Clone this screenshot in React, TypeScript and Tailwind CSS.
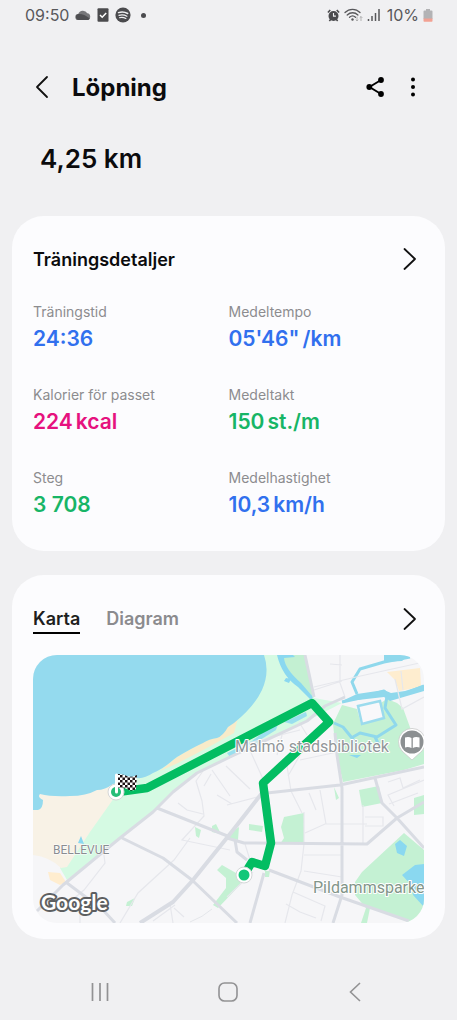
import React from "react";

type Metric = { label: string; value: string; unit?: string; tone: string };

const metrics: Metric[] = [
  { label: "Träningstid", value: "24:36", tone: "text-[#3170ee]" },
  { label: "Medeltempo", value: "05'46\"", unit: "/km", tone: "text-[#3170ee]" },
  { label: "Kalorier för passet", value: "224", unit: "kcal", tone: "text-[#e6127e]" },
  { label: "Medeltakt", value: "150", unit: "st./m", tone: "text-[#17b566]" },
  { label: "Steg", value: "3 708", tone: "text-[#17b566]" },
  { label: "Medelhastighet", value: "10,3", unit: "km/h", tone: "text-[#3170ee]" },
];

function StatusBar() {
  return (
    <div className="flex h-[30px] items-center justify-between pr-6 pl-[25px] text-[#58585b]">
      <div className="flex items-center gap-[6px]">
        <span className="text-base">09:50</span>
        <svg width="16" height="12" viewBox="0 0 16 12" aria-hidden="true">
          <path d="M3.5 11a3 3 0 0 1-.3-6A5 5 0 0 1 12.3 4.300a3.400 3.400 0 0 1 .2 6.700z" fill="#77777a" />
          <path d="M3.500 11a3 3 0 0 1-1-5.700C6 4.500 10 6 14.800 9.500c-.6 1-1.300 1.500-2.300 1.500z" fill="#4f4f52" />
        </svg>
        <svg width="12" height="14" viewBox="0 0 12 14" aria-hidden="true">
          <rect x=".5" y=".3" width="11" height="13.400" rx="1" fill="#4b4b4e" />
          <path d="m3 7 2.200 2.200L9.200 5" fill="none" stroke="#fff" strokeWidth="1.500" />
        </svg>
        <svg width="16" height="16" viewBox="0 0 16 16" aria-hidden="true">
          <circle cx="8" cy="8" r="7.600" fill="#4b4b4e" />
          <g fill="none" stroke="#f0f0f2" strokeLinecap="round">
            <path d="M3.500 5.600c3-.9 6.500-.6 9.200.9" strokeWidth="1.500" />
            <path d="M4 8.300c2.700-.8 5.600-.4 7.900.9" strokeWidth="1.300" />
            <path d="M4.500 10.700c2.200-.6 4.400-.3 6.400.8" strokeWidth="1.100" />
          </g>
        </svg>
        <span className="ml-1 size-[5px] rounded-full bg-[#4b4b4e]" />
      </div>
      <div className="flex items-center gap-1">
        <svg width="13" height="13" viewBox="0 0 14 14" aria-hidden="true">
          <path d="M1 3.700 3.500 1M13 3.700 10.500 1M2.500 13l1.700-2M11.500 13l-1.700-2" stroke="#4b4b4e" strokeWidth="1.700" />
          <circle cx="7" cy="7.500" r="5.400" fill="#4b4b4e" />
          <path d="M7 4.300v3.400h2.600" fill="none" stroke="#f0f0f2" strokeWidth="1.200" />
        </svg>
        <svg width="19" height="14" viewBox="0 0 19 14" aria-hidden="true">
          <g fill="none" stroke="#58585b" strokeWidth="1.300" strokeLinecap="round">
            <path d="M1 4.500c4.300-4.300 10.800-4.300 15 0M3.200 7c3.200-3 7.600-3 10.700 0M5.500 9.300c1.900-1.700 4.300-1.700 6 0" />
          </g>
          <circle cx="8.500" cy="11.500" r="1.200" fill="#58585b" />
          <path d="M13 8.500V13m-1.300-1.300L13 13l1.300-1.300M17 13V8.500m-1.300 1.300L17 8.500l1.300 1.300" fill="none" stroke="#aaa" strokeWidth=".9" />
        </svg>
        <svg width="13" height="14" viewBox="0 0 13 14" aria-hidden="true">
          <path d="M1.500 13v-2M5 13V8M8.500 13V5M12 13V1" stroke="#58585b" strokeWidth="1.500" />
        </svg>
        <span className="ml-[3px] text-base">10%</span>
        <svg width="10" height="14" viewBox="0 0 10 14" aria-hidden="true">
          <path d="M3 1h4v1.500h1.500q1 0 1 1V11h-9V3.500q0-1 1-1H3z" fill="#b3b3b5" />
          <path d="M.5 10.500h9V13q0 .7-.8.7H1.300q-.8 0-.8-.7z" fill="#f2a193" />
        </svg>
      </div>
    </div>
  );
}

function ChevronRight() {
  return (
    <svg width="14" height="24" viewBox="0 0 14 24" fill="none" aria-hidden="true">
      <path d="m1.500 2 10.500 10-10.500 10" stroke="#111" strokeWidth="1.800" strokeLinecap="round" strokeLinejoin="round" />
    </svg>
  );
}

function RouteMap() {
  return (
    <svg viewBox="33 655 391 268" className="block w-full rounded-[24px]" role="img" aria-label="Karta">
      <defs>
        <pattern id="checks" width="5" height="5" patternUnits="userSpaceOnUse">
          <rect width="5" height="5" fill="#fff" />
          <path d="M0 0h2.500v2.500H0zM2.500 2.500H5V5H2.500z" fill="#1c1113" />
        </pattern>
      </defs>
      <rect x="33" y="655" width="391" height="268" fill="#f6f6f8" />

      {/* parks along the shore */}
      <path d="M264 655H305L314 698 342 703 307 721 230 758 197 773 173 792 153 812 120 838 67 880 60 868 100 800 110 784 170 755 230 722Z" fill="#d5fae3" />
      <path d="M279 655H305L313 697Q292 676 279 658Z" fill="#c3f0d2" />
      {/* beach */}
      <path d="M33 792 113 784Q116 791 114 798 107 808 90 832L67 867 61 868Q50 857 33 855Z" fill="#f8f2e6" />
      <path d="M48 872 60 873 66 882 60 885 50 880Z" fill="#ffedcf" />
      <path d="M238 718 230 725 217 737 203 742 177 757 160 771 178 763 205 749 234 733Z" fill="#f8ebc9" />
      {/* sea */}
      <path d="M33 655H264Q270 672 262 690 254 707 234 723L228 727Q223 736 217 738 209 739 203 743 192 748 177 757L173 760Q163 769 153 773 144 779 137 778L113 784Q105 790 97 790 86 796 70 796 52 797 40 794 37 797 43 800 43 809 38 810L33 810Z" fill="#94daee" />

      {/* castle park and Pildammsparken */}
      <path d="M342 705 357 709 361 724 383 718 379 704 387 699 397 703 403 708 411 730 424 742V764L404 770 343 782 336 752 333 724Z" fill="#c4f1d3" />
      <path d="M404 833 424 850V914L410 923 390 914 370 908 367 923H361L366 908 355 895V882L362 872Z" fill="#c4f1d3" />
      <g fill="#c4f1d3">
        <path d="M284 817 304 813V844H280L284 838 281 827Z" />
        <path d="M359 790 379 786 382 803 362 807Z" />
        <path d="M414 798 424 795V814L414 815Z" />
        <path d="M217 870 222 865 243 877 240 885 218 908 213 905 226 888 226 878Z" />
        <path d="M127 902 135 898 132 906 126 906ZM195 827 201 830 199 838 196 836ZM212 826 216 824 221 834 212 832ZM249 824 263 826 262 832 249 830ZM230 833 239 827 238 840 229 838ZM334 787 339 798 336 800ZM265 871H270L269 877H265Z" />
      </g>
      <g fill="#8ad8f0">
        <path d="M395 844 400 840 407 846 404 856 397 853ZM402 875 415 865 424 864V907L413 895 411 885Z" />
        <path d="M78 843 81 836 84 844ZM349 755 361 755 357 758Z" />
        <path d="M277 655H293L295 657 284 658Q285 669 301 683L313 697 311 700 298 687Q282 676 277 655ZM286 678 291 679 289 683 284 681Z" />
        <path d="M227 753 252 741 266 730 278 724 276 730 252 745 230 757ZM284 722 306 712 307 716 292 724Z" opacity=".8" />
      </g>
      <path d="M387 672 420 668 421 687 399 691 395 680Z" fill="#feedcf" />
      <path d="M190 922Q203 917 212 909" fill="none" stroke="#e4e6ea" />

      {/* castle and canals */}
      <path d="M358 706 380 701 384 718 362 724Z" fill="#f8f8fa" stroke="#9bdbed" strokeWidth="2.500" />
      <path d="M357 694 352 682 360 669 384 662 410 657M342 702 360 698 384 691 389 697 404 694 424 686M387 696 385 708 396 725 377 737 360 733 353 737M334 723 343 727 352 738 360 750M375 737 381 749" fill="none" stroke="#8fd8ec" strokeWidth="3" strokeLinejoin="round" />
      <path d="M342 701 357 694 384 690 391 693 405 691 424 685V691L390 701 384 697 358 700ZM384 655H409L402 661 384 662Z" fill="#8fd8ec" />

      {/* minor streets */}
      <path d="M340 655 340 683 345 697M314 687 356 677 424 662M395 679 402 709 424 697M330 664 342 665M401 671 403 690M314 690 342 681M283 731 277 755M299 722 307 735M211 774 204 786M178 803 187 810 203 814M203 771 196 781 202 801 204 816 182 840 230 850M190 838 174 860 138 893 120 923M103 848 105 863 84 890 72 900M153 921 175 905M174 908 184 917M170 904 173 923M80 901V923M212 770 230 796M217 795 232 804M287 766 291 791 302 813M309 793 316 810M320 790 326 824M288 776 300 755M300 760 342 751M227 805 265 795M305 833 325 824 367 824M363 805V844M365 817H383V826H365M304 812V844L301 871 292 895 285 923M304 855H342M304 871 342 877M293 892 325 906 321 921M286 904 300 912 316 918M388 782 400 778 403 788 420 780M389 804 418 793M394 806 388 795 424 780M253 872 227 897M245 844 250 860M226 766 250 789M243 735 263 779M241 745 300 730" fill="none" stroke="#e6e7ec" strokeWidth="1.200" />

      {/* main roads */}
      <g fill="none" stroke="#d9dce3" strokeWidth="3" strokeLinejoin="round">
        <path d="M37 911 63 885 120 838 153 812 173 792 197 773 230 757 307 721 325 706 345 697M305 655 314 697M335 733 337 755 342 788V895L333 923M267 793 340 785 424 767M227 838 244 843 367 844 397 818 424 802M375 778 382 803 397 818 424 848M269 870 340 897 409 921M264 873 250 923M157 808 230 837M122 838 163 858 192 880 237 923M67 883 103 910 115 923M235 840 237 852 247 860" />
        <path d="M262 793 230 834 193 880 173 902 140 923" strokeWidth="4" />
      </g>

      {/* place names */}
      <g fontFamily="Roboto, sans-serif" stroke="#fff" strokeLinejoin="round" style={{ paintOrder: "stroke" }}>
        <text x="53" y="854" fontSize="12" fill="#8a8d91" strokeWidth="1">BELLEVUE</text>
        <text x="313" y="893" fontSize="16" fill="#829589" strokeWidth="2">Pildammsparke</text>
      </g>

      {/* run route */}
      <path d="M244 875 252 862 265 866 271 843 263 783 329 722 312 703 147 788 118 792" fill="none" stroke="#03bd62" strokeWidth="8.500" strokeLinejoin="round" />
      <circle cx="244" cy="875" r="8" fill="#fff" stroke="#d5d7d8" />
      <circle cx="244" cy="875" r="5.500" fill="#13c779" />
      <circle cx="116" cy="792" r="8" fill="#fff" stroke="#d5d7d8" />
      <circle cx="116" cy="792" r="5" fill="#27bd78" />
      <path d="M116.500 775V792" stroke="#fff" strokeWidth="3" strokeLinecap="round" />
      <path d="M118 774Q123 774 127 776 132 778 137 775L136 789Q132 792 127 789 122 787 118 788Z" fill="url(#checks)" />

      <g fontFamily="Roboto, sans-serif" stroke="#fff" strokeLinejoin="round" style={{ paintOrder: "stroke" }}>
        <text x="235" y="752" fontSize="16" fill="#929699" strokeWidth="2">Malmö stadsbibliotek</text>
      </g>
      <path d="M412 760 402 751A13.500 13.500 0 1 1 422 751Z" fill="#fff" stroke="#c9caca" strokeWidth=".8" />
      <circle cx="412" cy="742" r="11.500" fill="#8c9092" />
      <path d="M405 737.500Q409 736.500 411.500 738V748Q408 746.500 405 747.500ZM419.500 737.500Q415 736.500 412.800 738V748Q416 746.500 419.500 747.500Z" fill="#fff" />
      <text x="41" y="910" fontSize="21" fontWeight="700" fill="#fff" stroke="#5d5f61" strokeWidth="4" strokeLinejoin="round" fontFamily="Lato, sans-serif" style={{ paintOrder: "stroke" }}>Google</text>
    </svg>
  );
}

export default function App() {
  return (
    <div className="flex min-h-screen flex-col bg-[#f0f0f2] font-['Inter','Liberation_Sans',sans-serif] text-[#0b0b0d]">
      <StatusBar />

      <header className="mt-[37px] flex h-10 items-center px-7">
        <button type="button" aria-label="Tillbaka" className="flex size-7 items-center justify-center">
          <svg width="14" height="24" viewBox="0 0 14 24" fill="none" aria-hidden="true">
            <path d="M12 2 2 12l10 10" stroke="#111" strokeWidth="1.800" strokeLinecap="round" strokeLinejoin="round" />
          </svg>
        </button>
        <h1 className="ml-4 flex-1 pt-[2px] text-2xl font-bold">Löpning</h1>
        <button type="button" aria-label="Dela" className="flex size-7 items-center justify-center">
          <svg width="20" height="22" viewBox="0 0 20 22" aria-hidden="true">
            <path d="M16 4 4.500 11 16 18" fill="none" stroke="#000" strokeWidth="1.900" />
            <circle cx="16" cy="4" r="2.900" />
            <circle cx="4.300" cy="11" r="2.900" />
            <circle cx="16" cy="18" r="2.900" />
          </svg>
        </button>
        <button type="button" aria-label="Fler alternativ" className="ml-2 flex h-7 w-8 items-center justify-center">
          <svg width="6" height="22" viewBox="0 0 6 22" aria-hidden="true">
            <circle cx="3" cy="3.500" r="2" />
            <circle cx="3" cy="11" r="2" />
            <circle cx="3" cy="18.500" r="2" />
          </svg>
        </button>
      </header>

      <p className="mt-8 pl-10 text-[26px] leading-10 font-semibold">4,25 km</p>

      <main className="mt-[37px] flex flex-col gap-6 px-3">
        <section className="rounded-[32px] bg-[#fcfcfe] px-[21px] pt-[23px] pb-8">
          <div className="flex h-10 items-center justify-between">
            <h2 className="pt-px text-lg font-semibold">Träningsdetaljer</h2>
            <button type="button" aria-label="Visa träningsdetaljer" className="flex size-7 items-center justify-center">
              <ChevronRight />
            </button>
          </div>
          <dl className="mt-[23px] grid grid-cols-2 gap-y-8">
            {metrics.map((m) => (
              <div key={m.label} className="flex flex-col gap-[3px]">
                <dt className="text-sm leading-5 text-[#8c8c8f]">{m.label}</dt>
                <dd className={`flex gap-[3px] text-[21px] leading-7 font-semibold ${m.tone}`}>
                  <span>{m.value}</span>
                  {m.unit && <span>{m.unit}</span>}
                </dd>
              </div>
            ))}
          </dl>
        </section>

        <section className="rounded-[32px] bg-[#fcfcfe] px-[21px] pt-6 pb-4">
          <div className="flex h-10 items-center justify-between">
            <div role="tablist" className="flex gap-[26px] text-lg leading-[26px] font-semibold">
              <button type="button" role="tab" aria-selected="true" className="border-b-2 border-black pt-[2px] text-[#1e1e20]">
                Karta
              </button>
              <button type="button" role="tab" aria-selected="false" className="border-b-2 border-transparent pt-[2px] text-[#8b8b8e]">
                Diagram
              </button>
            </div>
            <button type="button" aria-label="Visa karta" className="flex size-7 items-center justify-center">
              <ChevronRight />
            </button>
          </div>
          <div className="mt-4">
            <RouteMap />
          </div>
        </section>
      </main>

      <nav aria-label="Systemnavigering" className="mt-auto flex h-14 items-center justify-between pr-[88px] pl-[86px]">
        <button type="button" aria-label="Senaste appar" className="flex size-7 items-center justify-center">
          <svg width="20" height="20" viewBox="0 0 20 20" aria-hidden="true">
            <path d="M2.500 1v18M10 1v18M17.500 1v18" stroke="#929294" strokeWidth="1.700" />
          </svg>
        </button>
        <button type="button" aria-label="Hem" className="flex size-7 items-center justify-center">
          <svg width="20" height="20" viewBox="0 0 20 20" aria-hidden="true">
            <rect x="1" y="1" width="18" height="18" rx="5.500" fill="none" stroke="#929294" strokeWidth="1.600" />
          </svg>
        </button>
        <button type="button" aria-label="Bakåt" className="flex size-7 items-center justify-center">
          <svg width="12" height="20" viewBox="0 0 12 20" aria-hidden="true">
            <path d="M11 1 1.500 10 11 19" fill="none" stroke="#929294" strokeWidth="1.600" />
          </svg>
        </button>
      </nav>
    </div>
  );
}
